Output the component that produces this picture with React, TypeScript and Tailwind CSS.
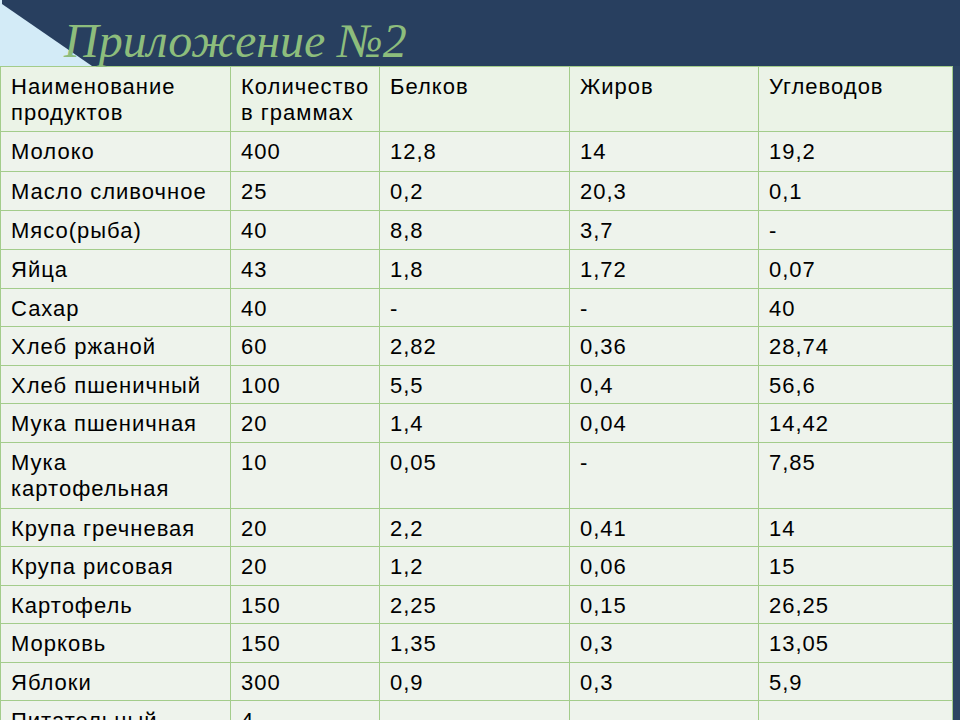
import React from 'react';

const cols = [230, 149, 190, 189, 194];

const header = ['Наименование продуктов', 'Количество в граммах', 'Белков', 'Жиров', 'Углеводов'];

const rows: { h: number; cells: string[] }[] = [
  { h: 40, cells: ['Молоко', '400', '12,8', '14', '19,2'] },
  { h: 39, cells: ['Масло сливочное', '25', '0,2', '20,3', '0,1'] },
  { h: 39, cells: ['Мясо(рыба)', '40', '8,8', '3,7', '-'] },
  { h: 39, cells: ['Яйца', '43', '1,8', '1,72', '0,07'] },
  { h: 38, cells: ['Сахар', '40', '-', '-', '40'] },
  { h: 39, cells: ['Хлеб ржаной', '60', '2,82', '0,36', '28,74'] },
  { h: 38, cells: ['Хлеб пшеничный', '100', '5,5', '0,4', '56,6'] },
  { h: 39, cells: ['Мука пшеничная', '20', '1,4', '0,04', '14,42'] },
  { h: 66, cells: ['Мука картофельная', '10', '0,05', '-', '7,85'] },
  { h: 38, cells: ['Крупа гречневая', '20', '2,2', '0,41', '14'] },
  { h: 39, cells: ['Крупа рисовая', '20', '1,2', '0,06', '15'] },
  { h: 38, cells: ['Картофель', '150', '2,25', '0,15', '26,25'] },
  { h: 39, cells: ['Морковь', '150', '1,35', '0,3', '13,05'] },
  { h: 38, cells: ['Яблоки', '300', '0,9', '0,3', '5,9'] },
  { h: 40, cells: ['Питательный', '4', '', '', ''] },
];

function Row({ h, cells, head }: { h: number; cells: string[]; head?: boolean }) {
  return (
    <div
      className={`flex border-b border-[#a3cc8b] ${head ? 'bg-[#ebf3e7]' : 'bg-[#eef3ec]'}`}
      style={{ height: h }}
    >
      {cells.map((c, i) => (
        <div
          key={i}
          className="shrink-0 border-r border-[#a3cc8b] pl-[10px] pr-1 pt-[7px] text-[22px] leading-[26px] tracking-[1px] text-black"
          style={{ width: cols[i] }}
        >
          {c}
        </div>
      ))}
    </div>
  );
}

export default function App() {
  return (
    <div
      className="relative w-[960px] h-[720px] overflow-hidden bg-[#283f5f]"
      style={{ fontFamily: '"Liberation Sans", Arial, sans-serif' }}
    >
      {/* top banner with corner triangle */}
      <div className="relative h-[66px]">
        <svg className="absolute left-0 top-0" width="100" height="66" viewBox="0 0 100 66">
          <polygon points="2,4 2,66 92,66" fill="#d3ebf7" />
          <rect x="0" y="0" width="2" height="66" fill="#d3ebf7" />
        </svg>
        <div
          className="absolute left-[64px] top-[11px] text-[48px] leading-[60px] italic text-[#8dbd7c]"
          style={{ fontFamily: '"Liberation Serif", "DejaVu Serif", serif' }}
        >
          Приложение №2
        </div>
      </div>

      <div className="flex">
        <div className="w-[953px] shrink-0 border-t border-l border-[#a3cc8b]">
          <Row h={65} cells={header} head />
          {rows.map((r, i) => (
            <Row key={i} h={r.h} cells={r.cells} />
          ))}
        </div>
        <div className="flex-1 bg-[#2d4563]" />
      </div>
    </div>
  );
}
